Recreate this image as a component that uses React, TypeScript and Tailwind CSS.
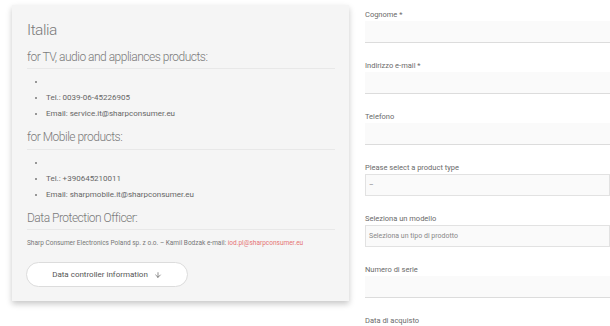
import { ArrowDown } from "lucide-react";

const font = { fontFamily: "Roboto, 'Liberation Sans', sans-serif" };

const Section = ({ title, items, pb }: { title: string; items: string[]; pb: string }) => (
  <div>
    <h3 className={`text-[12px] font-light tracking-[-0.5px] text-[#7a7a7a] leading-[16px] border-b border-[#e8e8e8] ${pb}`}>
      {title}
    </h3>
    <ul className="list-disc pl-[19px] pt-[5px] pb-[7px] text-[8px] text-[#666] leading-[16px] marker:text-[#777]">
      {items.map((it, i) => (
        <li key={i} className="min-h-[16px]">{it}</li>
      ))}
    </ul>
  </div>
);

const Field = ({ label, kind, value }: { label: string; kind?: "select"; value?: string }) => (
  <div className="mb-[17px]">
    <div className="text-[7.5px] leading-[12px] text-[#6a6a6a]">{label}</div>
    {kind === "select" ? (
      <div className="h-[22px] bg-[#fafafa] border border-[#e2e2e2] flex items-center px-[3px] text-[7px] text-[#888]">
        {value}
      </div>
    ) : (
      <div className="h-[22px] bg-[#fafafa] border-b border-[#dcdcdc]" />
    )}
  </div>
);

export default function App() {
  return (
    <div className="w-[610px] h-[326px] bg-white overflow-hidden flex" style={font}>
      {/* contact card */}
      <div className="pl-[12px] pt-[5px] shrink-0">
        <div className="w-[337px] h-[296px] bg-[#f5f5f5] shadow-[0_3px_6px_rgba(0,0,0,0.22)] pl-[12px] pr-[14px] pt-[15px]">
          <h2 className="text-[15.5px] font-light tracking-[-0.5px] text-[#7a7a7a] leading-[20px] pl-[3px] mb-[9px]">
            Italia
          </h2>
          <div className="pl-[3px]">
            <Section
              title="for TV, audio and appliances products:"
              pb="pb-[3px]"
              items={["", "Tel.: 0039-06-45226905", "Email: service.it@sharpconsumer.eu"]}
            />
            <Section
              title="for Mobile products:"
              pb="pb-[4px]"
              items={["", "Tel.: +390645210011", "Email: sharpmobile.it@sharpconsumer.eu"]}
            />
            <h3 className="text-[12px] font-light tracking-[-0.5px] text-[#7a7a7a] leading-[16px] pb-[3px] border-b border-[#e8e8e8]">
              Data Protection Officer:
            </h3>
            <p className="text-[6.5px] text-[#777] leading-[10px] mt-[8px]">
              Sharp Consumer Electronics Poland sp. z o.o. – Kamil Bodzak e-mail:{" "}
              <span className="text-[#e57373]">iod.pl@sharpconsumer.eu</span>
            </p>
            <button className="mt-[14px] -ml-[1px] w-[162px] h-[25px] rounded-full bg-white border border-[#dcdcdc] flex items-center justify-center gap-[6px] text-[8px] text-[#555]">
              Data controller information
              <ArrowDown size={8} strokeWidth={2} />
            </button>
          </div>
        </div>
      </div>

      {/* form */}
      <div className="ml-[16px] pt-[9px] flex-1">
        <Field label="Cognome *" />
        <Field label="Indirizzo e-mail *" />
        <Field label="Telefono" />
        <Field label="Please select a product type" kind="select" value="–" />
        <Field label="Seleziona un modello" kind="select" value="Seleziona un tipo di prodotto" />
        <Field label="Numero di serie" />
        <Field label="Data di acquisto" />
      </div>
    </div>
  );
}
